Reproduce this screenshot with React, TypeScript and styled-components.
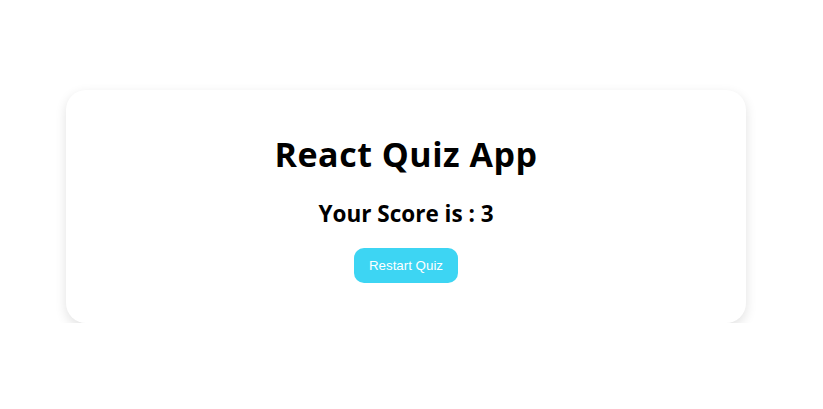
import React from "react";
import styled, { createGlobalStyle } from "styled-components";

const Global = createGlobalStyle`
  html, body { margin: 0; padding: 0; background: #ffffff; }
  body { font-family: "Open Sans", "Noto Sans", sans-serif; }
`;

const Page = styled.div`
  display: flex;
  padding: 90px 0 0 66px;
`;

const Card = styled.div`
  width: 680px;
  box-sizing: border-box;
  padding: 42px 20px 40px;
  background: #ffffff;
  border-radius: 20px;
  box-shadow: 0 4px 12px rgba(0, 0, 0, 0.12);
  display: flex;
  flex-direction: column;
  align-items: center;
`;

const Title = styled.h1`
  margin: 0;
  font-family: "Open Sans", sans-serif;
  font-size: 34px;
  letter-spacing: 0.5px;
  font-weight: 700;
  color: #000;
  line-height: 44px;
`;

const Score = styled.h2`
  margin: 22px 0 0;
  font-family: "Open Sans", sans-serif;
  font-size: 22.5px;
  font-weight: 700;
  color: #000;
  line-height: 32px;
`;

const Button = styled.button`
  margin-top: 18px;
  border: none;
  border-radius: 10px;
  background: #3dd5f3;
  color: #ffffff;
  font-family: "Liberation Sans", Arial, sans-serif;
  font-size: 13.333px;
  padding: 10px 15px;
  height: 35px;
  cursor: pointer;
`;

export default function App() {
  return (
    <>
      <Global />
      <Page>
        <Card>
          <Title>React Quiz App</Title>
          <Score>Your Score is : 3</Score>
          <Button>Restart Quiz</Button>
        </Card>
      </Page>
    </>
  );
}
